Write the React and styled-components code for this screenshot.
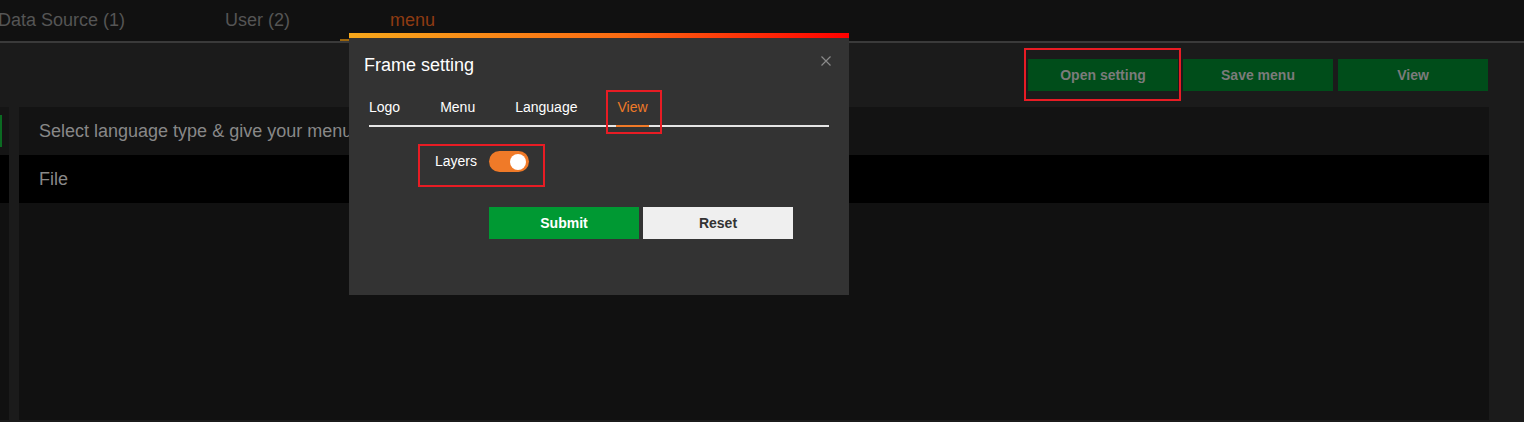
import React from "react";
import styled, { createGlobalStyle } from "styled-components";

const Global = createGlobalStyle`
  html, body { margin: 0; padding: 0; background: #1b1b1b; }
  body { font-family: "Liberation Sans", Arial, sans-serif; }
  * { box-sizing: border-box; }
`;

const Page = styled.div`
  position: relative;
  width: 1524px;
  height: 422px;
  overflow: hidden;
  background: #1b1b1b;
`;

const TabBar = styled.div`
  display: flex;
  height: 43px;
  background: #111111;
  border-bottom: 2px solid #3a3a3a;
`;

const TabList = styled.div`
  display: flex;
  margin-left: -52px;
`;

const Tab = styled.div`
  position: relative;
  padding: 0 50px;
  height: 41px;
  display: flex;
  align-items: center;
  font-size: 18px;
  color: ${(p) => (p.$active ? "#8e3b12" : "#555555")};
  &::after {
    content: "";
    display: ${(p) => (p.$active ? "block" : "none")};
    position: absolute;
    left: 0;
    right: 0;
    bottom: 0;
    height: 2px;
    background: #9a650e;
  }
`;

const Toolbar = styled.div`
  display: flex;
  justify-content: flex-end;
  gap: 5px;
  padding: 16px 36px 16px 0;
`;

const ToolButton = styled.button`
  position: relative;
  width: 150px;
  height: 32px;
  border: none;
  background: #004d1a;
  color: #7b7b7b;
  font-family: inherit;
  font-weight: bold;
  font-size: 14px;
  padding: 0;
  ${(p) =>
    p.$marked &&
    `&::after {
      content: "";
      position: absolute;
      left: -4px;
      right: -3px;
      top: -11px;
      bottom: -10px;
      border: 2px solid #e81c24;
    }`}
`;

const Main = styled.div`
  display: flex;
  height: 313px;
  gap: 10px;
  padding-right: 35px;
`;

const SideColumn = styled.div`
  width: 100px;
  margin-left: -91px;
  display: flex;
  flex-direction: column;
  background: #111111;
`;

const SideHead = styled.div`
  height: 48px;
  background: #151515;
  padding: 8px 7px 0 0;
`;

const SideInput = styled.div`
  height: 32px;
  border: 2px solid #0b6b22;
`;

const SideRow = styled.div`
  height: 48px;
  background: #000;
`;

const Panel = styled.div`
  flex: 1;
  display: flex;
  flex-direction: column;
  background: #111111;
`;

const PanelHead = styled.div`
  height: 48px;
  display: flex;
  align-items: center;
  padding-left: 20px;
  background: #131313;
  color: #888888;
  font-size: 18px;
  white-space: nowrap;
`;

const PanelRow = styled(PanelHead)`
  background: #000000;
`;

const Modal = styled.div`
  position: absolute;
  left: 349px;
  top: 33px;
  width: 500px;
  height: 262px;
  background: #333333;
  border-top: 5px solid transparent;
  border-image: linear-gradient(90deg, #f7a81b, #fb6a12 55%, #ff0000) 1;
  border-left: 0;
  border-right: 0;
  border-bottom: 0;
  padding: 17px 20px 0 15px;
`;

const ModalHead = styled.div`
  display: flex;
  justify-content: space-between;
  align-items: flex-start;
`;

const Title = styled.div`
  color: #ffffff;
  font-size: 18px;
  line-height: 20px;
`;

const Close = styled.svg`
  width: 10px;
  height: 10px;
  margin-top: 1px;
  margin-right: -2px;
`;

const ModalTabs = styled.div`
  display: flex;
  gap: 40px;
  margin: 24px 0 0 5px;
  border-bottom: 2px solid #e6e6e6;
`;

const ModalTab = styled.div`
  position: relative;
  font-size: 14px;
  line-height: 16px;
  padding-bottom: 10px;
  color: ${(p) => (p.$active ? "#f07a28" : "#ffffff")};
  ${(p) =>
    p.$active &&
    `
    &::before {
      content: "";
      position: absolute;
      left: -1px;
      right: -1px;
      bottom: -2px;
      height: 2px;
      background: #f07a28;
    }
    &::after {
      content: "";
      position: absolute;
      left: -11px;
      right: -14px;
      top: -9px;
      bottom: -9px;
      border: 2px solid #e81c24;
    }`}
`;

const FormRow = styled.div`
  position: relative;
  display: flex;
  align-items: center;
  gap: 12px;
  margin: 24px 0 0 71px;
  width: max-content;
  &::after {
    content: "";
    position: absolute;
    left: -17px;
    right: -16px;
    top: -7px;
    bottom: -15px;
    border: 2px solid #e81c24;
  }
`;

const Label = styled.span`
  color: #ffffff;
  font-size: 14px;
  margin-top: -2px;
`;

const Toggle = styled.div`
  width: 40px;
  height: 21px;
  border-radius: 11px;
  background: #f07a28;
  display: flex;
  align-items: center;
  justify-content: flex-end;
  padding-right: 3px;
`;

const Knob = styled.div`
  width: 16px;
  height: 16px;
  border-radius: 50%;
  background: #ffffff;
`;

const Actions = styled.div`
  display: flex;
  gap: 4px;
  margin: 35px 0 0 125px;
`;

const ActionButton = styled.button`
  width: 150px;
  height: 32px;
  border: none;
  padding: 0;
  font-family: inherit;
  font-weight: bold;
  font-size: 14px;
  background: ${(p) => (p.$primary ? "#009933" : "#efefef")};
  color: ${(p) => (p.$primary ? "#ffffff" : "#333333")};
`;

export default function App() {
  return (
    <Page>
      <Global />
      <TabBar>
        <TabList>
          <Tab>Data Source (1)</Tab>
          <Tab>User (2)</Tab>
          <Tab $active>menu</Tab>
        </TabList>
      </TabBar>
      <Toolbar>
        <ToolButton $marked>Open setting</ToolButton>
        <ToolButton>Save menu</ToolButton>
        <ToolButton>View</ToolButton>
      </Toolbar>
      <Main>
        <SideColumn>
          <SideHead>
            <SideInput />
          </SideHead>
          <SideRow />
        </SideColumn>
        <Panel>
          <PanelHead>Select language type &amp; give your menu name</PanelHead>
          <PanelRow>File</PanelRow>
        </Panel>
      </Main>
      <Modal>
        <ModalHead>
          <Title>Frame setting</Title>
          <Close viewBox="0 0 10 10">
            <path d="M0.5 0.5 L9.5 9.5 M9.5 0.5 L0.5 9.5" stroke="#8a8a8a" strokeWidth="1.2" />
          </Close>
        </ModalHead>
        <ModalTabs>
          <ModalTab>Logo</ModalTab>
          <ModalTab>Menu</ModalTab>
          <ModalTab>Language</ModalTab>
          <ModalTab $active>View</ModalTab>
        </ModalTabs>
        <FormRow>
          <Label>Layers</Label>
          <Toggle>
            <Knob />
          </Toggle>
        </FormRow>
        <Actions>
          <ActionButton $primary>Submit</ActionButton>
          <ActionButton>Reset</ActionButton>
        </Actions>
      </Modal>
    </Page>
  );
}
